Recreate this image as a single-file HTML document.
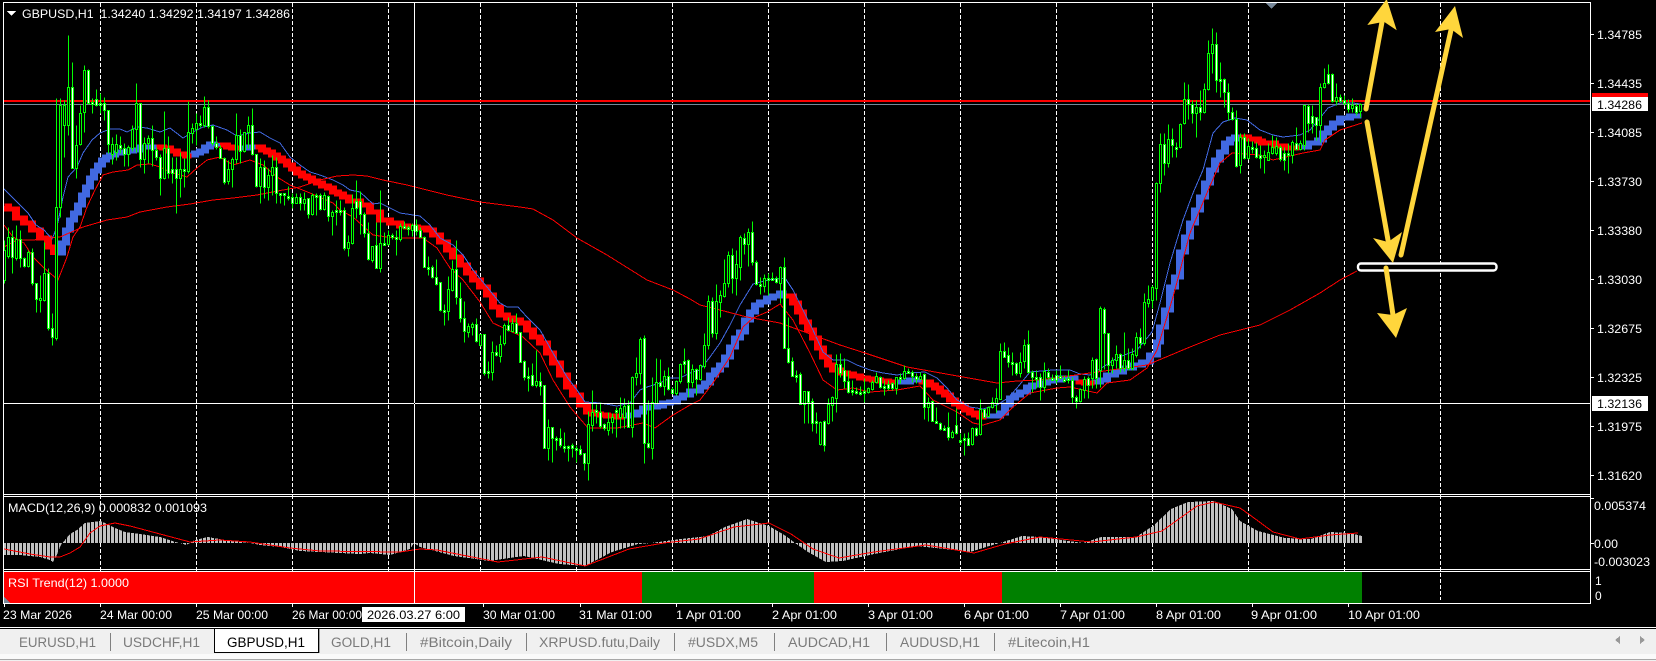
<!DOCTYPE html>
<html><head><meta charset="utf-8"><style>
html,body{margin:0;padding:0;background:#000;width:1656px;height:661px;overflow:hidden}
svg{display:block}
text{font-family:"Liberation Sans",sans-serif;font-size:12px;fill:#fff}
.c{shape-rendering:crispEdges}
.t{fill:#7a7a7a;font-size:13.5px}
</style></head><body>
<svg width="1656" height="661" viewBox="0 0 1656 661" xmlns="http://www.w3.org/2000/svg">
<defs><pattern id="h" patternUnits="userSpaceOnUse" x="3" y="0" width="4" height="4"><rect width="3" height="4" fill="#c0c0c0"/></pattern></defs>
<rect width="1656" height="661" fill="#000"/>
<g class="c">
<path d="M100.5 3V600M196.5 3V600M292.5 3V600M388.5 3V600M480.5 3V600M576.5 3V600M672.5 3V600M768.5 3V600M864.5 3V600M960.5 3V600M1056.5 3V600M1152.5 3V600M1248.5 3V600M1344.5 3V600M1440.5 3V600" stroke="#fff" stroke-dasharray="4 2" fill="none"/>
<rect x="4" y="100" width="1586" height="2" fill="#f00"/>
<rect x="4" y="104" width="1586" height="1" fill="#778899"/>
<!-- ribbon -->
<g id="rb" fill="none" stroke-width="5">
<path stroke="#f00" d="M6 206H8V209H16V218H24V223H32V230H40V238H48V247H54V255M157 147H163V148H170V151H177V154H186V156H190M216 145H227V147H232V148H240M254 147H262V150H267V152H272V155H277V158H282V161H287V165H292V169H297V173H302V176H307V178H312V181H317V183H322V186H328V188H333V192H338V194H343V197H349V201H360V205H370V212H380V220H390V223H400V226H407V227H417V228H427V230H433V235H440V242H447V250H453V257H460V265H467V273H473V280H480V287H487V295H493V307H500V315H507V318H513V320H520V323H527V330H533V337H540V343H547V353H553V363H560V375H567V387H573V395H580V405H587V412H593V414H600V415H607V416H617V417H623M786 296H793V303H798V312H803V322H808V330H813V338H818V348H823V357H828V365H833V370H840V373H847V374H853V376H860V378H867V379H873V380H880V381H888V382H895M920 382H930V385H935V388H940V392H945V395H950V400H955V404H960V407H965V410H970V413H975V415H980V417H985M1077 382H1085V383H1093M1238 137H1248V139H1258V141H1262V143H1275V146H1285V148H1298"/>
<path stroke="#4169e1" d="M58 253H62V243H66V230H70V220H74V213H78V205H82V195H86V187H90V178H94V171H98V165H102V160H106V157H110V155H115V153H120V152H127V151H133V150H140V147H155M190 155H195V153H200V151H205V147H210V144H216V143M240 148H248V147H254M623 416H630V415H637V412H643V408H650V407H657V406H663V403H670V402H677V398H683V395H690V391H700V387H705V383H710V375H715V370H720V365H725V357H730V347H735V338H740V332H745V320H750V312H755V305H760V302H767V298H773V296H780V293H785M895 382H910V380H920M985 416H1000V413H1005V405H1010V398H1015V395H1020V392H1027V387H1032V385H1040V383H1047V381H1053V380H1060V378H1077M1093 382H1100V380H1107V375H1115V372H1123V368H1133V365H1142V362H1150V355H1157V342H1160V327H1165V310H1170V287H1175V277H1180V252H1185V237H1190V223H1195V210H1200V197H1205V183H1210V170H1215V160H1220V152H1225V143H1230V139H1235V137H1238M1298 147H1308V143H1318V140H1323V133H1328V128H1333V123H1340V118H1350V116H1360"/>
</g>
<use href="#rb" x="-1.5"/>
<use href="#rb" x="1.5"/>
<!-- thin lines -->
<g fill="none" stroke-width="1">
<polyline stroke="#4169e1" points="4,189 12,197 20,205 28,213 36,225 44,230 52,239 55,232 58,222 63,197 68,177 77,167 83,153 92,140 100,133 110,129 120,129 127,132 137,127 147,128 160,132 170,128 183,138 193,132 203,127 213,125 227,130 237,136 250,133 260,132 270,138 280,143 290,157 300,165 310,172 320,175 333,180 343,185 350,190 360,192 373,204 380,203 390,208 400,213 420,216 430,225 440,238 453,245 463,255 473,270 487,287 500,303 507,307 518,307 527,317 540,330 553,353 567,377 577,390 585,402 600,403 617,406 630,403 640,390 647,387 660,383 670,378 680,378 690,373 700,370 710,357 720,343 730,325 740,305 753,284 768,280 785,278 793,290 803,310 813,330 823,352 833,360 847,360 857,365 870,370 883,373 897,375 910,373 925,372 937,378 947,388 957,400 970,407 983,409 997,405 1008,398 1017,388 1030,372 1053,370 1070,370 1080,374 1090,375 1103,367 1117,358 1137,350 1152,332 1160,303 1170,263 1183,220 1193,193 1203,170 1213,133 1223,122 1235,118 1247,120 1260,130 1273,135 1283,137 1300,135 1310,130 1320,118 1328,108 1340,103 1353,103 1360,104"/>
<polyline stroke="#f00" points="4,225 13,237 24,243 33,257 43,267 58,280 67,257 73,237 80,227 87,207 95,190 103,175 113,172 128,170 137,165 150,164 160,167 170,172 187,177 197,168 207,160 220,157 233,165 250,160 263,165 277,177 290,185 310,193 333,203 340,210 353,217 373,235 387,237 397,238 423,238 437,248 450,268 463,280 480,302 493,323 510,331 523,337 540,353 553,380 570,407 588,428 617,428 643,423 655,428 673,415 690,405 700,400 713,383 730,357 743,327 753,318 767,312 780,304 793,320 810,353 823,380 837,390 853,388 870,392 897,390 920,386 933,400 957,412 973,423 983,425 1000,420 1013,407 1030,393 1057,388 1070,387 1097,393 1107,383 1130,380 1147,368 1157,350 1173,297 1190,233 1207,193 1220,163 1232,153 1260,155 1273,160 1303,153 1320,150 1325,140 1340,130 1362,123"/>
<polyline stroke="#f00" points="4,247 17,240 33,240 60,237 83,227 107,220 127,217 140,212 167,207 190,204 213,200 233,198 257,195 283,190 300,187 320,180 337,176 353,175 367,176 383,180 407,185 447,195 480,202 520,207 533,209 553,220 577,238 607,255 647,280 673,290 690,299 700,305 720,310 747,317 780,323 813,335 840,345 865,353 907,367 963,377 997,383 1017,381 1040,380 1097,372 1147,365 1190,347 1220,335 1240,330 1260,325 1290,310 1320,293 1340,280 1357,271"/>
</g>
<!-- candles -->
<g transform="translate(.5 .5)" stroke="#0f0" stroke-width="1">
<path fill="none" d="M4 240V283M8 227V258M12 230V273M16 225V260M20 230V267M24 257V267M28 250V267M32 248V285M36 283V312M40 275V312M44 242V301M48 268V330M52 313V345M56 98V340M60 98V217M64 100V157M68 35V135M72 62V168M76 125V178M80 105V145M84 65V132M88 69V104M92 98V113M96 89V106M100 93V113M104 97V120M108 110V153M112 137V164M116 134V160M120 136V153M124 143V166M128 145V166M132 125V151M136 83V152M140 103V167M144 137V173M148 135V163M152 125V166M156 147V160M160 154V195M164 111V179M168 136V178M172 157V183M176 157V213M180 152V197M184 158V187M188 101V173M192 123V143M196 113V145M200 115V127M204 96V127M208 100V128M212 125V145M216 136V149M220 145V158M224 157V184M228 160V184M232 157V187M236 113V163M240 129V163M244 132V152M248 116V148M252 108V155M256 154V187M260 158V203M264 160V198M268 168V200M272 155V195M276 157V203M280 193V203M284 193V205M288 186V200M292 193V208M296 193V203M300 193V210M304 192V210M308 198V218M312 193V215M316 193V215M320 193V210M324 192V210M328 195V221M332 210V235M336 200V225M340 200V215M344 207V250M348 235V256M352 194V244M356 180V218M360 191V234M364 212V237M368 222V260M372 246V262M376 222V268M380 190V272M384 232V245M388 230V245M392 233V239M396 230V255M400 223V241M404 221V228M408 225V235M412 223V236M416 219V235M420 227V237M424 236V267M428 256V275M432 265V278M436 259V285M440 282V311M444 304V325M448 276V320M452 260V291M456 240V304M460 282V322M464 301V342M468 323V337M472 322V335M476 318V342M480 334V346M484 334V375M488 361V378M492 341V380M496 345V356M500 335V362M504 323V345M508 317V331M512 318V332M516 313V333M520 332V362M524 360V380M528 367V391M532 363V386M536 350V387M540 372V395M544 385V448M548 419V460M552 427V462M556 436V450M560 428V447M564 432V452M568 445V461M572 443V457M576 445V462M580 445V455M584 453V470M588 411V480M592 390V431M596 404V423M600 402V428M604 423V430M608 412V435M612 413V433M616 407V437M620 397V428M624 398V428M628 400V427M632 376V437M636 357V385M640 337V384M644 335V463M648 400V448M652 377V459M656 358V404M660 359V387M664 370V395M668 367V390M672 387V393M676 380V395M680 363V383M684 348V373M688 359V397M692 364V387M696 368V395M700 364V380M704 333V368M708 295V349M712 297V337M716 284V339M720 290V317M724 259V297M728 251V287M732 248V293M736 250V295M740 235V280M744 233V254M748 228V266M752 221V265M756 260V285M760 277V294M764 274V292M768 273V295M772 272V279M776 276V283M780 266V303M784 257V348M788 317V363M792 357V376M796 370V382M800 372V404M804 391V423M808 391V423M812 398V431M816 412V433M820 421V445M824 420V451M828 398V424M832 396V421M836 354V412M840 353V377M844 358V388M848 370V393M852 380V395M856 387V394M860 386V395M864 378V402M868 387V393M872 380V390M876 372V383M880 376V388M884 380V395M888 380V390M892 382V390M896 377V394M900 373V383M904 365V379M908 368V373M912 370V382M916 373V383M920 372V379M924 373V419M928 397V421M932 400V421M936 407V423M940 422V430M944 425V429M948 412V440M952 430V438M956 408V434M960 433V445M964 433V455M968 432V445M972 427V445M976 427V436M980 399V435M984 409V418M988 406V417M992 397V408M996 388V412M1000 343V399M1004 342V357M1008 347V367M1012 352V375M1016 362V375M1020 352V377M1024 339V368M1028 330V373M1032 370V392M1036 370V388M1040 373V400M1044 362V392M1048 368V380M1052 374V380M1056 370V383M1060 365V377M1064 375V382M1068 370V383M1072 377V403M1076 395V408M1080 388V402M1084 376V398M1088 376V398M1092 357V388M1096 358V388M1100 306V387M1104 307V369M1108 333V373M1112 357V373M1116 345V368M1120 353V372M1124 332V371M1128 348V370M1132 348V370M1136 332V357M1140 328V348M1144 293V345M1148 285V307M1152 285V308M1156 182V300M1160 133V192M1164 133V175M1168 124V167M1172 128V157M1176 142V157M1180 123V148M1184 82V124M1188 84V119M1192 100V123M1196 100V137M1200 90V120M1204 83V113M1208 40V90M1212 28V73M1216 32V92M1220 62V97M1224 78V107M1228 83V120M1232 107V120M1236 110V167M1240 133V173M1244 133V159M1248 138V159M1252 141V153M1256 142V158M1260 145V168M1264 150V173M1268 143V160M1272 135V154M1276 137V155M1280 145V161M1284 147V170M1288 143V173M1292 140V163M1296 127V150M1300 140V150M1304 105V150M1308 104V132M1312 105V133M1316 117V140M1320 83V142M1324 68V88M1328 64V84M1332 73V102M1336 83V105M1340 94V102M1344 95V105M1348 99V112M1352 98V112M1356 103V115M1360 103V117"/>
<path fill="#000" d="M3 250h2V280h-2zM7 237h2V256h-2zM15 239h2V258h-2zM27 252h2V266h-2zM39 298h2V300h-2zM43 273h2V300h-2zM55 207h2V338h-2zM59 105h2V207h-2zM63 105h2V125h-2zM67 87h2V125h-2zM75 145h2V168h-2zM79 113h2V144h-2zM83 70h2V112h-2zM111 144h2V154h-2zM115 144h2V152h-2zM127 147h2V154h-2zM131 129h2V148h-2zM135 103h2V129h-2zM143 143h2V159h-2zM147 138h2V143h-2zM163 148h2V178h-2zM179 169h2V178h-2zM187 132h2V171h-2zM191 128h2V133h-2zM195 123h2V129h-2zM203 107h2V125h-2zM227 169h2V181h-2zM231 159h2V169h-2zM235 135h2V159h-2zM243 132h2V151h-2zM247 125h2V132h-2zM259 167h2V186h-2zM267 175h2V187h-2zM271 167h2V175h-2zM295 197h2V203h-2zM303 199h2V203h-2zM311 195h2V214h-2zM323 195h2V209h-2zM331 212h2V216h-2zM347 242h2V248h-2zM351 208h2V243h-2zM371 246h2V260h-2zM379 243h2V268h-2zM387 235h2V244h-2zM399 226h2V239h-2zM411 225h2V230h-2zM447 289h2V311h-2zM451 269h2V290h-2zM467 326h2V332h-2zM471 324h2V327h-2zM479 334h2V345h-2zM491 352h2V372h-2zM499 344h2V356h-2zM503 325h2V343h-2zM511 323h2V331h-2zM535 381h2V385h-2zM547 427h2V448h-2zM587 424h2V463h-2zM591 412h2V425h-2zM607 422h2V430h-2zM611 417h2V422h-2zM619 408h2V417h-2zM623 406h2V417h-2zM631 377h2V427h-2zM635 373h2V377h-2zM639 339h2V373h-2zM651 402h2V448h-2zM655 382h2V403h-2zM663 376h2V386h-2zM675 381h2V393h-2zM679 364h2V381h-2zM691 369h2V382h-2zM699 365h2V379h-2zM703 345h2V366h-2zM707 301h2V345h-2zM715 301h2V333h-2zM719 295h2V302h-2zM723 283h2V296h-2zM727 255h2V283h-2zM735 264h2V278h-2zM739 237h2V267h-2zM747 232h2V244h-2zM763 278h2V286h-2zM779 267h2V283h-2zM803 391h2V404h-2zM819 422h2V444h-2zM827 404h2V423h-2zM831 397h2V405h-2zM835 364h2V398h-2zM867 388h2V392h-2zM871 382h2V389h-2zM875 376h2V382h-2zM895 377h2V388h-2zM903 371h2V378h-2zM919 376h2V379h-2zM927 402h2V407h-2zM951 432h2V437h-2zM971 428h2V444h-2zM979 409h2V434h-2zM987 407h2V416h-2zM991 402h2V407h-2zM995 398h2V403h-2zM999 351h2V399h-2zM1019 362h2V373h-2zM1023 345h2V361h-2zM1043 371h2V387h-2zM1079 389h2V401h-2zM1083 379h2V390h-2zM1091 360h2V378h-2zM1099 308h2V370h-2zM1111 360h2V365h-2zM1115 354h2V360h-2zM1123 360h2V368h-2zM1131 354h2V368h-2zM1135 337h2V355h-2zM1143 302h2V343h-2zM1147 299h2V303h-2zM1151 287h2V300h-2zM1155 183h2V288h-2zM1159 144h2V183h-2zM1167 139h2V163h-2zM1179 124h2V147h-2zM1183 99h2V123h-2zM1195 107h2V113h-2zM1203 89h2V112h-2zM1207 53h2V89h-2zM1211 44h2V53h-2zM1239 137h2V165h-2zM1247 146h2V158h-2zM1263 155h2V157h-2zM1267 152h2V160h-2zM1271 147h2V153h-2zM1275 146h2V153h-2zM1291 142h2V155h-2zM1299 143h2V149h-2zM1303 105h2V145h-2zM1319 87h2V125h-2zM1323 83h2V87h-2zM1335 97h2V101h-2zM1351 105h2V108h-2zM1359 104h2V111h-2z"/>
<path fill="#fff" d="M11 237h2V257h-2zM19 239h2V258h-2zM23 258h2V266h-2zM31 252h2V283h-2zM35 283h2V299h-2zM47 273h2V328h-2zM51 328h2V337h-2zM71 87h2V168h-2zM87 70h2V103h-2zM91 102h2V104h-2zM95 99h2V105h-2zM99 103h2V105h-2zM103 103h2V110h-2zM107 110h2V144h-2zM119 145h2V148h-2zM123 148h2V154h-2zM139 103h2V159h-2zM151 138h2V150h-2zM155 150h2V157h-2zM159 157h2V178h-2zM167 148h2V173h-2zM171 169h2V173h-2zM175 169h2V178h-2zM183 169h2V171h-2zM199 123h2V125h-2zM207 107h2V126h-2zM211 126h2V143h-2zM215 143h2V147h-2zM219 148h2V158h-2zM223 158h2V182h-2zM239 135h2V151h-2zM251 125h2V154h-2zM255 154h2V186h-2zM263 167h2V187h-2zM275 167h2V193h-2zM279 193h2V195h-2zM283 193h2V195h-2zM287 196h2V198h-2zM291 197h2V203h-2zM299 197h2V203h-2zM307 198h2V214h-2zM315 195h2V197h-2zM319 195h2V209h-2zM327 196h2V216h-2zM335 210h2V212h-2zM339 210h2V212h-2zM343 210h2V248h-2zM355 201h2V208h-2zM359 201h2V214h-2zM363 214h2V233h-2zM367 233h2V259h-2zM375 245h2V268h-2zM383 243h2V245h-2zM391 235h2V237h-2zM395 237h2V239h-2zM403 226h2V228h-2zM407 227h2V229h-2zM415 225h2V231h-2zM419 230h2V237h-2zM423 237h2V267h-2zM427 267h2V269h-2zM431 267h2V277h-2zM435 277h2V284h-2zM439 282h2V310h-2zM443 310h2V312h-2zM455 269h2V297h-2zM459 298h2V318h-2zM463 318h2V331h-2zM475 324h2V341h-2zM483 334h2V373h-2zM487 371h2V373h-2zM495 352h2V355h-2zM507 325h2V330h-2zM515 323h2V333h-2zM519 332h2V362h-2zM523 361h2V377h-2zM527 376h2V378h-2zM531 375h2V385h-2zM539 381h2V386h-2zM543 385h2V448h-2zM551 427h2V438h-2zM555 438h2V440h-2zM559 438h2V445h-2zM563 446h2V448h-2zM567 446h2V448h-2zM571 445h2V448h-2zM575 448h2V450h-2zM579 449h2V454h-2zM583 453h2V463h-2zM595 410h2V412h-2zM599 412h2V426h-2zM603 424h2V428h-2zM615 410h2V412h-2zM627 405h2V427h-2zM643 338h2V443h-2zM647 443h2V447h-2zM659 382h2V386h-2zM667 376h2V389h-2zM671 389h2V393h-2zM683 361h2V364h-2zM687 360h2V382h-2zM695 369h2V379h-2zM711 301h2V333h-2zM731 255h2V278h-2zM743 238h2V244h-2zM751 232h2V262h-2zM755 262h2V284h-2zM759 284h2V286h-2zM767 278h2V280h-2zM771 278h2V280h-2zM775 278h2V282h-2zM783 267h2V348h-2zM787 348h2V362h-2zM791 361h2V376h-2zM795 375h2V377h-2zM799 374h2V404h-2zM807 391h2V402h-2zM811 401h2V423h-2zM815 421h2V423h-2zM823 421h2V445h-2zM839 364h2V373h-2zM843 370h2V381h-2zM847 381h2V392h-2zM851 390h2V392h-2zM855 391h2V393h-2zM859 392h2V394h-2zM863 391h2V393h-2zM879 377h2V387h-2zM883 386h2V388h-2zM887 384h2V388h-2zM891 383h2V388h-2zM899 377h2V379h-2zM907 371h2V373h-2zM911 372h2V376h-2zM915 376h2V379h-2zM923 374h2V407h-2zM931 401h2V421h-2zM935 421h2V423h-2zM939 423h2V429h-2zM943 428h2V430h-2zM947 427h2V437h-2zM955 425h2V433h-2zM959 440h2V442h-2zM963 438h2V440h-2zM967 438h2V445h-2zM975 428h2V435h-2zM983 409h2V417h-2zM1003 351h2V357h-2zM1007 355h2V362h-2zM1011 362h2V364h-2zM1015 363h2V373h-2zM1027 344h2V372h-2zM1031 372h2V377h-2zM1035 377h2V379h-2zM1039 377h2V387h-2zM1047 372h2V377h-2zM1051 378h2V380h-2zM1055 375h2V380h-2zM1059 376h2V378h-2zM1063 379h2V381h-2zM1067 378h2V380h-2zM1071 380h2V397h-2zM1075 397h2V401h-2zM1087 378h2V385h-2zM1095 359h2V378h-2zM1103 309h2V333h-2zM1107 333h2V365h-2zM1119 354h2V368h-2zM1127 360h2V368h-2zM1139 337h2V343h-2zM1163 144h2V163h-2zM1171 139h2V145h-2zM1175 147h2V149h-2zM1187 99h2V104h-2zM1191 104h2V113h-2zM1199 107h2V112h-2zM1215 44h2V80h-2zM1219 79h2V81h-2zM1223 79h2V92h-2zM1227 92h2V112h-2zM1231 112h2V119h-2zM1235 119h2V166h-2zM1243 137h2V158h-2zM1251 147h2V149h-2zM1255 148h2V157h-2zM1259 155h2V158h-2zM1279 147h2V159h-2zM1283 153h2V160h-2zM1287 153h2V155h-2zM1295 143h2V149h-2zM1307 106h2V123h-2zM1311 116h2V123h-2zM1315 117h2V125h-2zM1327 74h2V83h-2zM1331 74h2V101h-2zM1339 97h2V101h-2zM1343 100h2V103h-2zM1347 103h2V109h-2zM1355 106h2V112h-2z"/>
</g>
<!-- MACD -->
<polygon fill="url(#h)" points="3,543 4,555 20,555 40,557 50,560 53,562 56,557 60,547 62,543 65,540 70,534 77,530 85,523 100,521 105,523 115,528 125,532 140,534 160,537 175,542 180,543 186,545 190,543 195,540 208,537 225,540 240,542 250,543 260,545 280,547 300,551 320,552 340,553 360,554 370,553 390,555 400,552 410,549 414,543 420,547 454,556 489,561 524,556 559,564 585,566 612,552 638,544 651,543 681,539 708,536 725,527 747,519 769,526 786,536 795,543 808,552 826,562 843,561 874,554 917,546 944,549 970,552 996,544 1000,543 1022,536 1040,537 1083,543 1101,537 1136,537 1153,526 1171,509 1188,502 1214,501 1232,509 1240,521 1258,531 1285,538 1311,539 1330,532 1350,533 1362,536 1362,543"/>
<polyline fill="none" stroke="#f00" points="4,549 30,554 50,557 60,557 70,553 80,547 90,533 100,526 115,523 130,526 190,542 220,540 250,542 290,548 320,551 400,552 420,549 437,550 472,557 498,562 542,557 585,566 629,549 664,543 699,539 734,527 769,523 791,534 813,549 839,558 874,552 926,545 974,553 1005,544 1040,537 1092,542 1136,537 1162,531 1197,506 1214,502 1240,508 1250,515 1273,532 1300,539 1330,535 1358,533"/>
<!-- RSI -->
<rect x="4" y="572" width="638" height="31" fill="#f00"/>
<rect x="642" y="572" width="172" height="31" fill="#008000"/>
<rect x="814" y="572" width="188" height="31" fill="#f00"/>
<rect x="1002" y="572" width="360" height="31" fill="#008000"/>
<polygon points="4,597 10,603 4,603" fill="#778899"/>
<!-- crosshair -->
<rect x="4" y="403" width="1586" height="1" fill="#fff"/>
<rect x="414" y="3" width="1" height="600" fill="#fff"/>
<rect x="414" y="403" width="1" height="1" fill="#000"/>
<!-- frames -->
<g fill="#fff">
<rect x="3" y="2" width="1588" height="1"/>
<rect x="3" y="2" width="1" height="602"/>
<rect x="1590" y="2" width="1" height="602"/>
<rect x="3" y="494" width="1588" height="1"/>
<rect x="3" y="496" width="1588" height="1"/>
<rect x="3" y="569" width="1588" height="1"/>
<rect x="3" y="571" width="1588" height="1"/>
<rect x="3" y="603" width="1588" height="1"/>
<path d="M1591 34h3v1h-3zM1591 83h3v1h-3zM1591 132h3v1h-3zM1591 181h3v1h-3zM1591 230h3v1h-3zM1591 279h3v1h-3zM1591 328h3v1h-3zM1591 377h3v1h-3zM1591 426h3v1h-3zM1591 475h3v1h-3zM1591 498h3v1h-3zM1591 543h3v1h-3z"/>
<path d="M100 604h1v3h-1zM196 604h1v3h-1zM292 604h1v3h-1zM483 604h1v3h-1zM580 604h1v3h-1zM676 604h1v3h-1zM772 604h1v3h-1zM868 604h1v3h-1zM964 604h1v3h-1zM1060 604h1v3h-1zM1156 604h1v3h-1zM1252 604h1v3h-1zM1348 604h1v3h-1zM4 604h1v3h-1z"/>
</g>
<polygon points="1266,3 1277,3 1271.5,9" fill="#778899"/>
<polygon points="7,11 16,11 11.5,16" fill="#fff"/>
<!-- price boxes -->
<rect x="1592" y="93" width="56" height="4" fill="#f00"/>
<rect x="1592" y="97" width="56" height="14" fill="#fff"/>
<rect x="1592" y="396" width="56" height="15" fill="#fff"/>
<!-- bottom -->
<rect x="362" y="607" width="103" height="15" fill="#fff"/>
<rect y="627" width="1656" height="34" fill="#f0f0f0"/>
<rect y="627" width="1656" height="1" fill="#fff"/>
<rect y="628" width="1656" height="1" fill="#000"/>
<rect y="654" width="1656" height="5" fill="#fafafa"/>
<rect y="659" width="1656" height="1" fill="#a8a8a8"/>
<rect x="215" y="629" width="103" height="23" fill="#fff"/>
<path d="M214.5 629V652.500H318.500V629" fill="none" stroke="#000"/>
<rect x="319" y="629" width="1" height="24" fill="#a0a0a0"/>
<path d="M110 633h1v18h-1zM406 633h1v18h-1zM526 633h1v18h-1zM674 633h1v18h-1zM774 633h1v18h-1zM886 633h1v18h-1zM994 633h1v18h-1z" fill="#808080"/>
<polygon points="1620,636 1620,644 1615,640" fill="#999"/>
<polygon points="1640,636 1640,644 1645,640" fill="#999"/>
</g>
<!-- labels -->
<text x="22" y="18" textLength="268" lengthAdjust="spacingAndGlyphs" xml:space="preserve">GBPUSD,H1  1.34240 1.34292 1.34197 1.34286</text>
<text x="8" y="512" textLength="199" lengthAdjust="spacingAndGlyphs">MACD(12,26,9) 0.000832 0.001093</text>
<text x="8" y="587" textLength="121" lengthAdjust="spacingAndGlyphs">RSI Trend(12) 1.0000</text>
<g>
<text x="1597" y="39" textLength="45" lengthAdjust="spacingAndGlyphs">1.34785</text>
<text x="1597" y="88" textLength="45" lengthAdjust="spacingAndGlyphs">1.34435</text>
<text x="1597" y="137" textLength="45" lengthAdjust="spacingAndGlyphs">1.34085</text>
<text x="1597" y="186" textLength="45" lengthAdjust="spacingAndGlyphs">1.33730</text>
<text x="1597" y="235" textLength="45" lengthAdjust="spacingAndGlyphs">1.33380</text>
<text x="1597" y="284" textLength="45" lengthAdjust="spacingAndGlyphs">1.33030</text>
<text x="1597" y="333" textLength="45" lengthAdjust="spacingAndGlyphs">1.32675</text>
<text x="1597" y="382" textLength="45" lengthAdjust="spacingAndGlyphs">1.32325</text>
<text x="1597" y="431" textLength="45" lengthAdjust="spacingAndGlyphs">1.31975</text>
<text x="1597" y="480" textLength="45" lengthAdjust="spacingAndGlyphs">1.31620</text>
<text x="1597" y="109" textLength="45" lengthAdjust="spacingAndGlyphs" style="fill:#000">1.34286</text>
<text x="1597" y="408" textLength="45" lengthAdjust="spacingAndGlyphs" style="fill:#000">1.32136</text>
<text x="1594" y="510" textLength="52" lengthAdjust="spacingAndGlyphs">0.005374</text>
<text x="1594" y="548" textLength="24" lengthAdjust="spacingAndGlyphs">0.00</text>
<text x="1594" y="566" textLength="56" lengthAdjust="spacingAndGlyphs">-0.003023</text>
<text x="1595" y="585">1</text>
<text x="1595" y="600">0</text>
</g>
<g>
<text x="3" y="619" textLength="69" lengthAdjust="spacingAndGlyphs">23 Mar 2026</text>
<text x="100" y="619" textLength="72" lengthAdjust="spacingAndGlyphs">24 Mar 00:00</text>
<text x="196" y="619" textLength="72" lengthAdjust="spacingAndGlyphs">25 Mar 00:00</text>
<text x="292" y="619" textLength="70" lengthAdjust="spacingAndGlyphs">26 Mar 00:00</text>
<text x="367" y="619" textLength="93" lengthAdjust="spacingAndGlyphs" style="fill:#000">2026.03.27 6:00</text>
<text x="483" y="619" textLength="72" lengthAdjust="spacingAndGlyphs">30 Mar 01:00</text>
<text x="579" y="619" textLength="73" lengthAdjust="spacingAndGlyphs">31 Mar 01:00</text>
<text x="676" y="619" textLength="65" lengthAdjust="spacingAndGlyphs">1 Apr 01:00</text>
<text x="772" y="619" textLength="65" lengthAdjust="spacingAndGlyphs">2 Apr 01:00</text>
<text x="868" y="619" textLength="65" lengthAdjust="spacingAndGlyphs">3 Apr 01:00</text>
<text x="964" y="619" textLength="65" lengthAdjust="spacingAndGlyphs">6 Apr 01:00</text>
<text x="1060" y="619" textLength="65" lengthAdjust="spacingAndGlyphs">7 Apr 01:00</text>
<text x="1156" y="619" textLength="65" lengthAdjust="spacingAndGlyphs">8 Apr 01:00</text>
<text x="1251" y="619" textLength="66" lengthAdjust="spacingAndGlyphs">9 Apr 01:00</text>
<text x="1348" y="619" textLength="72" lengthAdjust="spacingAndGlyphs">10 Apr 01:00</text>
</g>
<g>
<text class="t" x="19" y="647" textLength="77" lengthAdjust="spacingAndGlyphs">EURUSD,H1</text>
<text class="t" x="123" y="647" textLength="77" lengthAdjust="spacingAndGlyphs">USDCHF,H1</text>
<text class="t" x="227" y="647" textLength="78" lengthAdjust="spacingAndGlyphs" style="fill:#000">GBPUSD,H1</text>
<text class="t" x="331" y="647" textLength="60" lengthAdjust="spacingAndGlyphs">GOLD,H1</text>
<text class="t" x="420" y="647" textLength="92" lengthAdjust="spacingAndGlyphs">#Bitcoin,Daily</text>
<text class="t" x="539" y="647" textLength="121" lengthAdjust="spacingAndGlyphs">XRPUSD.futu,Daily</text>
<text class="t" x="688" y="647" textLength="70" lengthAdjust="spacingAndGlyphs">#USDX,M5</text>
<text class="t" x="788" y="647" textLength="82" lengthAdjust="spacingAndGlyphs">AUDCAD,H1</text>
<text class="t" x="900" y="647" textLength="80" lengthAdjust="spacingAndGlyphs">AUDUSD,H1</text>
<text class="t" x="1008" y="647" textLength="82" lengthAdjust="spacingAndGlyphs">#Litecoin,H1</text>
</g>
<!-- annotations -->
<rect x="1358" y="263.500" width="138.500" height="7" rx="3" fill="#000" stroke="#fff" stroke-width="2.400"/>
<g fill="#ffd63c" stroke="none">
<path d="M1366 109L1382 22" stroke="#ffd63c" stroke-width="5" stroke-linecap="round" fill="none"/>
<polygon points="1386.700,-1 1396.700,30.300 1384,21.700 1367.300,25"/>
<path d="M1401 255L1451 30" stroke="#ffd63c" stroke-width="5" stroke-linecap="round" fill="none"/>
<polygon points="1455,6 1463,38 1451,29 1435,32"/>
<path d="M1367 122L1388 240" stroke="#ffd63c" stroke-width="5" stroke-linecap="round" fill="none"/>
<polygon points="1393,263 1373,238 1388,242 1402,232"/>
<path d="M1386 268L1393 315" stroke="#ffd63c" stroke-width="5" stroke-linecap="round" fill="none"/>
<polygon points="1396,338 1377,313 1393,315 1407,308"/>
</g>
</svg>
</body></html>
